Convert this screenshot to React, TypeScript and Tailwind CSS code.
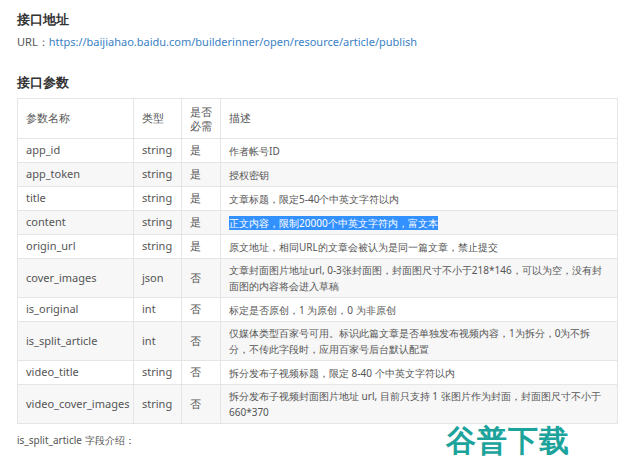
const rows: [string, string, string, string, boolean?][] = [
  ['app_id', 'string', '是', '作者帐号ID'],
  ['app_token', 'string', '是', '授权密钥'],
  ['title', 'string', '是', '文章标题，限定5-40个中英文字符以内'],
  ['content', 'string', '是', '正文内容，限制20000个中英文字符内，富文本', true],
  ['origin_url', 'string', '是', '原文地址，相同URL的文章会被认为是同一篇文章，禁止提交'],
  ['cover_images', 'json', '否', '文章封面图片地址url, 0-3张封面图，封面图尺寸不小于218*146，可以为空，没有封面图的内容将会进入草稿'],
  ['is_original', 'int', '否', '标定是否原创，1 为原创，0 为非原创'],
  ['is_split_article', 'int', '否', '仅媒体类型百家号可用。标识此篇文章是否单独发布视频内容，1为拆分，0为不拆分，不传此字段时，应用百家号后台默认配置'],
  ['video_title', 'string', '否', '拆分发布子视频标题，限定 8-40 个中英文字符以内'],
  ['video_cover_images', 'string', '否', '拆分发布子视频封面图片地址 url, 目前只支持 1 张图片作为封面，封面图尺寸不小于660*370'],
]

export default function App() {
  return (
    <div className="relative h-[461px] w-[620px] overflow-hidden bg-white pl-[17px] pt-[10px] text-[11px] text-[#555] [font-family:'Liberation_Sans','Noto_Sans_CJK_SC',sans-serif]">
      <h2 className="text-[13px] font-bold leading-[18px] text-[#333]">接口地址</h2>
      <p className="mt-[6px] leading-[16px]">
        URL：<span className="text-[#3b7fc4]">https://baijiahao.baidu.com/builderinner/open/resource/article/publish</span>
      </p>
      <h2 className="mt-[23px] text-[13px] font-bold leading-[18px] text-[#333]">接口参数</h2>
      <table className="mt-[7px] w-[601px] table-fixed border-collapse">
        <colgroup>
          <col className="w-[116px]" />
          <col className="w-[48px]" />
          <col className="w-[39px]" />
          <col />
        </colgroup>
        <tbody>
          <tr className="h-[40px]">
            <td className="border border-[#e5e5e5] px-[8px]">参数名称</td>
            <td className="border border-[#e5e5e5] px-[8px]">类型</td>
            <td className="border border-[#e5e5e5] px-[8px] leading-[14px]">是否<br />必需</td>
            <td className="border border-[#e5e5e5] px-[8px]">描述</td>
          </tr>
          {rows.map(([n, t, r, d, hl], i) => (
            <tr key={n} className={i % 2 === 1 ? 'bg-[#f7f7f7]' : 'bg-white'}>
              <td className="h-[24px] border border-[#e5e5e5] px-[8px]">{n}</td>
              <td className="border border-[#e5e5e5] px-[8px]">{t}</td>
              <td className="border border-[#e5e5e5] px-[8px]">{r}</td>
              <td className="border border-[#e5e5e5] px-[8px] py-[3px] text-[10px] leading-[16px]">
                {hl ? <span className="bg-[#3390ff] text-white">{d}</span> : d}
              </td>
            </tr>
          ))}
        </tbody>
      </table>
      <p className="mt-[9px] text-[10px]">is_split_article 字段介绍：</p>
      <div className="absolute left-[446px] top-[423px] text-[30px] font-black leading-[34px] tracking-[1px] text-[#1ba39c]">谷普下载</div>
    </div>
  )
}
